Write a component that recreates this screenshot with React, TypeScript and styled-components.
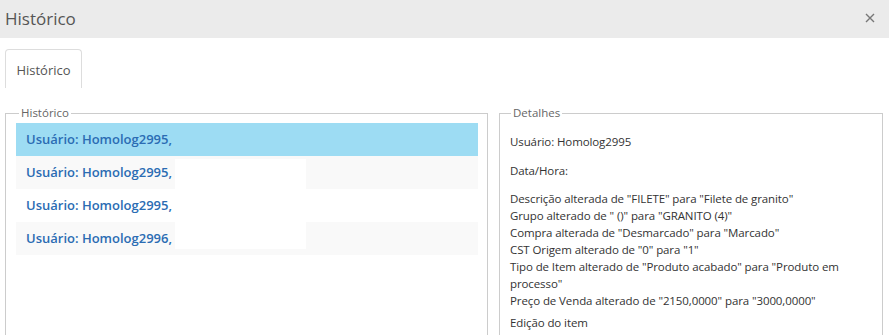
import { FC } from "react"
import styled, { createGlobalStyle } from "styled-components"

const Global = createGlobalStyle`
  html, body {
    margin: 0;
    padding: 0;
    background: #fff;
  }
  body {
    font-family: "Open Sans", "Noto Sans", sans-serif;
    color: #333;
  }
`

const Modal = styled.div`
  width: 889px;
  height: 335px;
  overflow: hidden;
  background: #fff;
`

const Header = styled.div`
  height: 38px;
  background: #ebebeb;
  display: flex;
  align-items: center;
  justify-content: space-between;
  padding: 0 12px 2px 5px;
  box-sizing: border-box;
`

const Title = styled.div`
  font-size: 17px;
  color: #555;
`

const Close = styled.button`
  border: 0;
  background: none;
  padding: 0;
  width: 14px;
  height: 14px;
  display: flex;
  align-items: center;
  justify-content: center;
  color: #777;
  cursor: pointer;
`

const Body = styled.div`
  padding: 11px 7px 0 5px;
`

const Tabs = styled.div`
  display: flex;
  height: 39px;
`

const Tab = styled.div<{ active?: boolean }>`
  width: 77px;
  box-sizing: border-box;
  border: 1px solid #ddd;
  border-bottom: 0;
  border-radius: 4px 4px 0 0;
  display: flex;
  align-items: center;
  justify-content: center;
  padding-top: 2px;
  font-size: 13px;
  color: ${p => (p.active ? "#555" : "#337ab7")};
`

const Panels = styled.div`
  display: grid;
  grid-template-columns: 483px 384px;
  gap: 11px;
  margin-top: 18px;
`

const Box = styled.fieldset<{ pad: string }>`
  margin: 0;
  border: 1px solid #ccc;
  padding: ${p => p.pad};
  min-height: 240px;
  min-width: 0;
`

const Legend = styled.legend<{ offset: number }>`
  margin-left: ${p => p.offset}px;
  padding: 0 2px;
  font-size: 11.5px;
  color: #666;
  line-height: 14px;
`

const Row = styled.div<{ selected?: boolean; stripe?: boolean }>`
  height: 33px;
  display: flex;
  align-items: flex-start;
  padding-left: 10px;
  background: ${p => (p.selected ? "#9ddcf3" : p.stripe ? "#f9f9f9" : "#fff")};
`

const RowText = styled.span`
  line-height: 33px;
  font-size: 13px;
  font-weight: 600;
  color: #2b6cb3;
`

const Blank = styled.span<{ top: number; h: number }>`
  display: block;
  width: 131px;
  margin-left: 3px;
  margin-top: ${p => p.top}px;
  height: ${p => p.h}px;
  background: #fff;
`

const Line = styled.div<{ gap?: number }>`
  font-size: 11.5px;
  letter-spacing: -0.1px;
  line-height: 17px;
  margin-bottom: ${p => p.gap ?? 0}px;
`

const rows = [
  { user: "Homolog2995", selected: true },
  { user: "Homolog2995", blank: { top: 3, h: 30 } },
  { user: "Homolog2995" },
  { user: "Homolog2996", blank: { top: 0, h: 27 } },
]

const changes = [
  'Descrição alterada de "FILETE" para "Filete de granito"',
  'Grupo alterado de " ()" para "GRANITO (4)"',
  'Compra alterada de "Desmarcado" para "Marcado"',
  'CST Origem alterado de "0" para "1"',
  'Tipo de Item alterado de "Produto acabado" para "Produto em processo"',
  'Preço de Venda alterado de "2150,0000" para "3000,0000"',
]

const App: FC = () => {
  return (
    <>
      <Global />
      <Modal>
        <Header>
          <Title>Histórico</Title>
          <Close aria-label="Fechar">
            <svg width="10" height="10" viewBox="0 0 10 10">
              <path d="M1 1L9 9M9 1L1 9" stroke="#777" strokeWidth="1.4" />
            </svg>
          </Close>
        </Header>
        <Body>
          <Tabs>
            <Tab active>Histórico</Tab>
          </Tabs>
          <Panels>
            <Box pad="3px 9px 0 10px">
              <Legend offset={3}>Histórico</Legend>
              {rows.map((r, i) => (
                <Row key={i} selected={r.selected} stripe={i % 2 === 1}>
                  <RowText>Usuário: {r.user},</RowText>
                  {r.blank && <Blank top={r.blank.top} h={r.blank.h} />}
                </Row>
              ))}
            </Box>
            <Box pad="13px 10px 0 10px">
              <Legend offset={1}>Detalhes</Legend>
              <Line gap={12}>Usuário: Homolog2995</Line>
              <Line gap={11}>Data/Hora:</Line>
              {changes.map((c, i) => (
                <Line key={i}>{c}</Line>
              ))}
              <Line style={{ marginTop: 5 }}>Edição do item</Line>
            </Box>
          </Panels>
        </Body>
      </Modal>
    </>
  )
}

export default App
